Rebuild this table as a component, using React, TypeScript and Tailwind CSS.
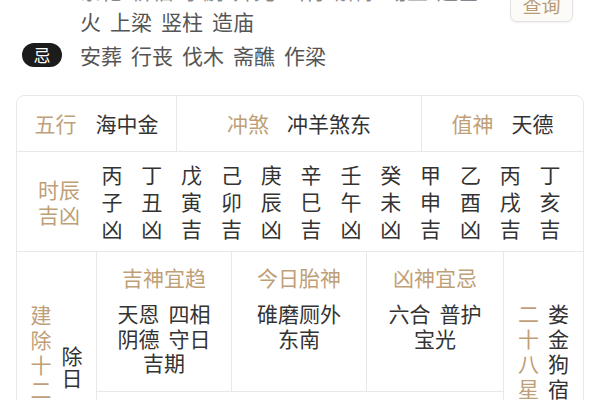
import React from "react";

const TAN = "text-[#bf9f78]";

function Words({ words, className = "" }: { words: string[]; className?: string }) {
  return (
    <div className={`flex gap-[9px] whitespace-nowrap ${className}`}>
      {words.map((w, i) => (
        <span key={i}>{w}</span>
      ))}
    </div>
  );
}

const hours = [
  ["丙", "子", "凶"],
  ["丁", "丑", "凶"],
  ["戊", "寅", "吉"],
  ["己", "卯", "吉"],
  ["庚", "辰", "凶"],
  ["辛", "巳", "吉"],
  ["壬", "午", "凶"],
  ["癸", "未", "凶"],
  ["甲", "申", "吉"],
  ["乙", "酉", "凶"],
  ["丙", "戌", "吉"],
  ["丁", "亥", "吉"],
];

function VText({ text, className = "" }: { text: string; className?: string }) {
  return (
    <div className={`flex flex-col items-center w-[22px] ${className}`}>
      {text.split("").map((c, i) => (
        <span key={i}>{c}</span>
      ))}
    </div>
  );
}

function GodCell({ title, lines, last = false }: { title: string; lines: string[][]; last?: boolean }) {
  return (
    <div className={`flex flex-col items-center pt-[13px] ${last ? "flex-1" : "w-[135px] border-r border-[#e8e8e8]"}`}>
      <div className={`${TAN} leading-[25px]`}>{title}</div>
      <div className="mt-[11px] flex flex-col items-center leading-[24.5px]">
        {lines.map((l, i) => (
          <Words key={i} words={l} />
        ))}
      </div>
    </div>
  );
}

export default function App() {
  return (
    <div className="w-[600px] h-[400px] overflow-hidden bg-white text-[#333] text-[21px] font-['Noto_Sans_CJK_SC','Noto_Sans',sans-serif]">
      {/* top part */}
      <div className="flex items-start -mt-[24px] h-[119px]">
        <div className="flex-1 flex flex-col">
          <Words
            className="pl-[80px] leading-[28px] text-[#888]"
            words={["祭祀", "祈福", "求嗣", "开光", "出行", "解除", "动土", "起基"]}
          />
          <Words className="mt-[3px] pl-[80px] leading-[28px] text-[#555]" words={["火", "上梁", "竖柱", "造庙"]} />
          <div className="flex items-center mt-[6px] h-[28px]">
            <div className="ml-[22px] w-[40px] h-[24px] rounded-full bg-[#1c1c1c] text-white text-[17px] leading-[24px] flex items-center justify-center">
              忌
            </div>
            <Words className="ml-[18px] leading-[28px] text-[#555]" words={["安葬", "行丧", "伐木", "斋醮", "作梁"]} />
          </div>
        </div>
        <div className="mt-[13px] mr-[27px] w-[63px] h-[33px] rounded-[7px] border border-[#e2e2e2] bg-[#fdfbf8] text-[#b89a74] text-[19px] flex items-center justify-center shadow-[0_1px_2px_rgba(0,0,0,0.06)]">
          查询
        </div>
      </div>

      {/* table */}
      <div className="ml-[16px] w-[568px] border border-[#e8e8e8] rounded-[8px]">
        {/* row 1 */}
        <div className="flex h-[56px] border-b border-[#e8e8e8]">
          <div className="w-[160px] border-r border-[#e8e8e8] flex items-center justify-center gap-[19px]">
            <span className={TAN}>五行</span>
            <span>海中金</span>
          </div>
          <div className="w-[245px] border-r border-[#e8e8e8] flex items-center justify-center gap-[18px]">
            <span className={TAN}>冲煞</span>
            <span>冲羊煞东</span>
          </div>
          <div className="flex-1 flex items-center justify-center gap-[18px]">
            <span className={TAN}>值神</span>
            <span>天德</span>
          </div>
        </div>

        {/* row 2 */}
        <div className="flex items-center h-[100px] border-b border-[#e8e8e8]">
          <div className={`ml-[21px] w-[44px] flex flex-col leading-[25px] ${TAN}`}>
            <span>时辰</span>
            <span>吉凶</span>
          </div>
          <div className="ml-[10px] grid grid-cols-12 w-[478px] leading-[27px]">
            {hours.map((h, i) => (
              <div key={i} className="flex flex-col items-center">
                {h.map((c, j) => (
                  <span key={j}>{c}</span>
                ))}
              </div>
            ))}
          </div>
        </div>

        {/* row 3 */}
        <div className="flex h-[228px]">
          <div className="w-[80px] border-r border-[#e8e8e8] flex justify-center items-start gap-[9px]">
            <VText text="建除十二神" className={`${TAN} leading-[25px] pt-[50px]`} />
            <VText text="除日" className="leading-[22px] pt-[92px]" />
          </div>
          <div className="w-[407px] border-r border-[#e8e8e8] flex flex-col">
            <div className="flex h-[140px] border-b border-[#e8e8e8]">
              <GodCell title="吉神宜趋" lines={[["天恩", "四相"], ["阴德", "守日"], ["吉期"]]} />
              <GodCell title="今日胎神" lines={[["碓磨厕外"], ["东南"]]} />
              <GodCell title="凶神宜忌" lines={[["六合", "普护"], ["宝光"]]} last />
            </div>
            <div className="flex-1" />
          </div>
          <div className="flex-1 flex justify-center items-start gap-[8px] pt-[49px]">
            <VText text="二十八星宿" className={`${TAN} leading-[25px]`} />
            <VText text="娄金狗宿" className="leading-[25px]" />
          </div>
        </div>
      </div>
    </div>
  );
}
